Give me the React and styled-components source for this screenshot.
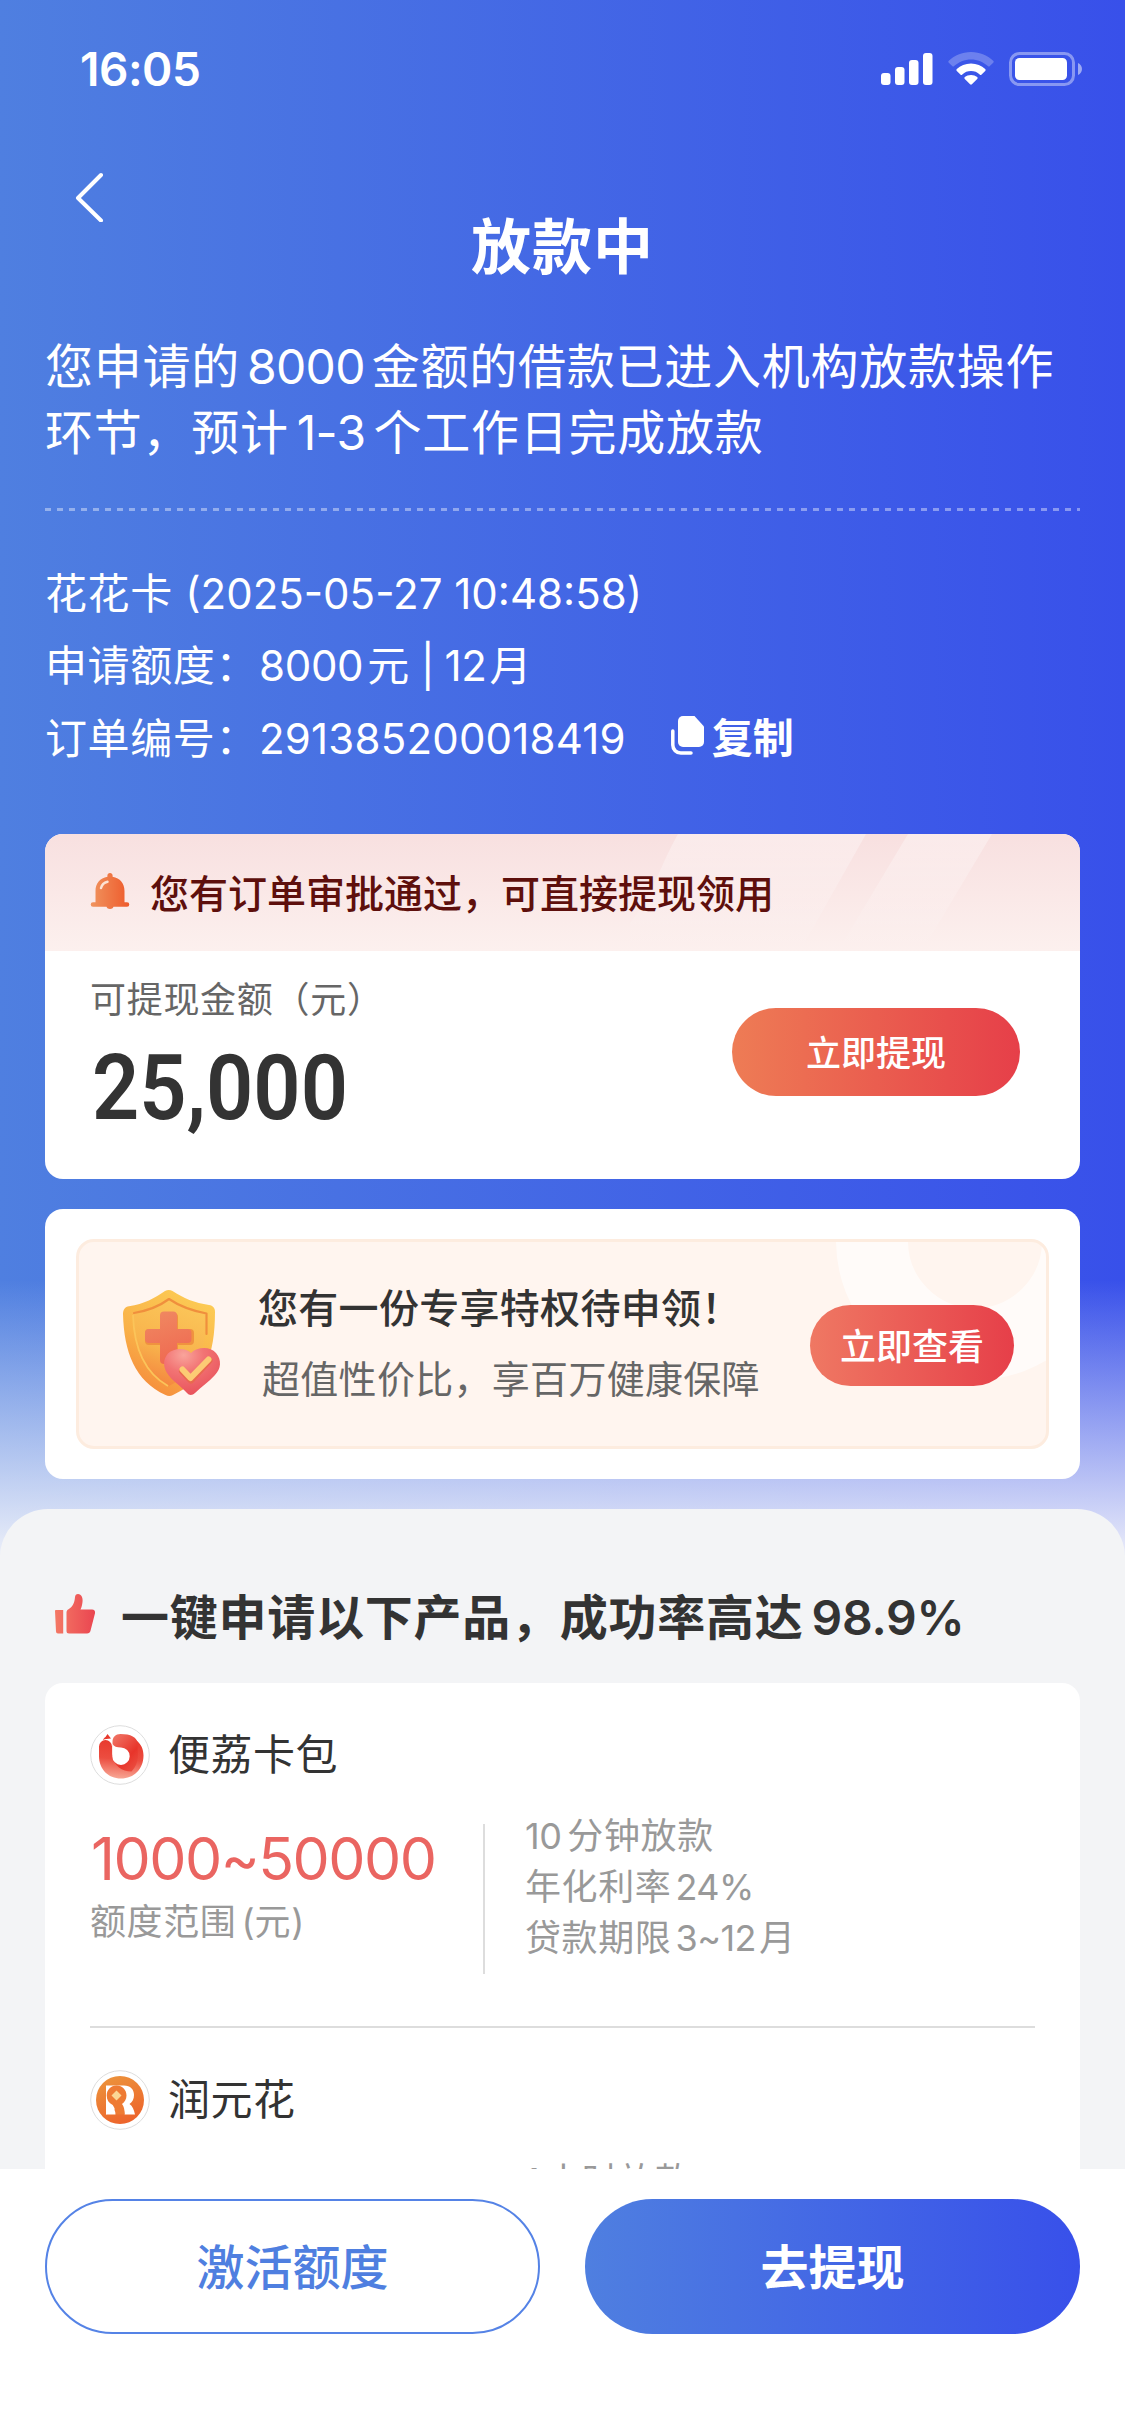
import React from 'react';
import styled, { createGlobalStyle } from 'styled-components';

const GlobalStyle = createGlobalStyle`
  * {
    box-sizing: border-box;
  }
  body {
    margin: 0;
    font-family: Inter, 'Noto Sans CJK SC', sans-serif;
    text-autospace: no-autospace;
    color: #333;
  }
  svg {
    display: block;
    flex: none;
  }
`;

const Page = styled.div`
  width: 1125px;
  height: 2436px;
  display: flex;
  flex-direction: column;
  overflow: hidden;
  background: linear-gradient(to bottom, rgba(243, 244, 250, 0) 1280px, #f3f4fa 1570px),
    linear-gradient(to right, #4f7fe0, #3850ea);
`;

const Content = styled.main`
  flex: 1;
  min-height: 0;
  overflow: hidden;
`;

const StatusBar = styled.div`
  height: 137px;
  padding: 0 42px 0 80px;
  display: flex;
  align-items: center;
  justify-content: space-between;
`;

const Time = styled.span`
  color: #fff;
  font-size: 46px;
  font-weight: 600;
  letter-spacing: -0.5px;
`;

const StatusIcons = styled.div`
  display: flex;
  align-items: center;
  gap: 15px;
`;

const NavBar = styled.div`
  height: 122px;
  padding: 35px 0 0 72px;
`;

const Title = styled.h1`
  margin: -47px 0 0;
  height: 70px;
  line-height: 70px;
  text-align: center;
  color: #fff;
  font-size: 60px;
  font-weight: 600;
  letter-spacing: 1px;
`;

const Intro = styled.p`
  margin: 52px 45px 0;
  padding-bottom: 42px;
  color: #fff;
  font-size: 48px;
  line-height: 66px;
  letter-spacing: 0.75px;
  white-space: nowrap;
`;

const Dashes = styled.div`
  height: 3px;
  margin: 0 45px;
  background: repeating-linear-gradient(
    to right,
    rgba(255, 255, 255, 0.4) 0 6px,
    transparent 6px 12px
  );
`;

const OrderInfo = styled.div`
  margin: 43px 45px 0;
  padding-bottom: 2px;
  color: #fff;
  font-size: 42px;
  letter-spacing: 0.6px;
`;

const InfoRow = styled.div`
  height: 72.5px;
  display: flex;
  align-items: center;
  white-space: pre;
`;

/* Latin digits get a little air next to Chinese characters */
const Num = styled.span`
  letter-spacing: ${(props) => props.$track || 0}px;
  margin-left: ${(props) => props.$left || 0}px;
  margin-right: ${(props) => props.$right || 0}px;
`;

const CopyButton = styled.button`
  display: flex;
  align-items: center;
  gap: 7px;
  margin-left: 45px;
  padding: 0;
  border: 0;
  background: none;
  color: #fff;
  font: 700 41px/60px 'Noto Sans CJK SC', sans-serif;
`;

const Card = styled.section`
  margin: ${(props) => props.$top}px 45px 0;
  border-radius: 18px;
  background: #fff;
  overflow: hidden;
`;

const Notice = styled.div`
  position: relative;
  height: 117px;
  padding: 0 0 2px 45px;
  display: flex;
  align-items: center;
  gap: 20px;
  background: linear-gradient(to bottom, #f8e0e0, #fcf0ee);
  color: #5e0f0c;
  font-size: 39px;
  font-weight: 500;
`;

const NoticeText = styled.span`
  position: relative;
`;

const Stripes = styled.svg`
  position: absolute;
  top: 0;
  right: 0;
`;

const Withdraw = styled.div`
  height: 228px;
  padding: 25px 60px 0 45px;
  display: flex;
  justify-content: space-between;
`;

const AmountLabel = styled.div`
  height: 48px;
  line-height: 48px;
  font-size: 36px;
  letter-spacing: 0.7px;
  color: #666;
`;

const Amount = styled.div`
  margin: 12px 0 0 2px;
  line-height: 106px;
  font-family: Roboto, sans-serif;
  font-size: 90px;
  font-weight: 600;
  transform: scaleX(0.92);
  transform-origin: left;
`;

const PillButton = styled.button`
  width: ${(props) => props.$width}px;
  height: ${(props) => props.$height}px;
  margin-top: ${(props) => props.$top}px;
  padding: 0 0 2px;
  flex: none;
  border: 0;
  border-radius: 50px;
  background: linear-gradient(to right, ${(props) => props.$from}, #e63f49);
  color: #fff;
  font: 500 ${(props) => props.$size}px 'Noto Sans CJK SC', sans-serif;
`;

const Privilege = styled.div`
  position: relative;
  margin: 30px 31px;
  height: 210px;
  padding: 0 32px 0 44px;
  display: flex;
  border: 3px solid #fdecdf;
  border-radius: 18px;
  background: #fff5ef;
  overflow: hidden;
`;

const Ring = styled.div`
  position: absolute;
  top: -140px;
  left: 757px;
  width: 278px;
  height: 278px;
  border: 72px solid rgba(255, 255, 255, 0.62);
  border-radius: 50%;
`;

const IconSlot = styled.div`
  padding-top: 46px;
`;

const PrivilegeText = styled.div`
  flex: 1;
  padding: 37px 0 0 35px;
  white-space: nowrap;
`;

const PrivilegeTitle = styled.div`
  line-height: 60px;
  font-size: 40px;
  font-weight: 500;
  letter-spacing: 0.3px;
`;

const PrivilegeSub = styled.div`
  margin: 10px 0 0 4px;
  line-height: 60px;
  font-size: 38px;
  letter-spacing: 0.3px;
  color: #666;
`;

const PrivilegeAction = styled.div`
  position: relative;
`;

const Sheet = styled.section`
  margin-top: 30px;
  padding-top: 69px;
  border-radius: 48px 48px 0 0;
  background: #f3f4f6;
`;

const SheetTitle = styled.h2`
  height: 72px;
  margin: 0 0 0 54px;
  display: flex;
  align-items: center;
  gap: 25px;
  font-size: 48px;
  font-weight: 600;
  letter-spacing: 0.75px;
  white-space: nowrap;
`;

const Product = styled.article`
  height: 345px;
  margin: 0 45px;
  padding-top: 42px;
  border-bottom: 2px solid #ddd;
`;

const ProductHead = styled.div`
  height: 60px;
  display: flex;
  align-items: center;
  gap: 18px;
  font-size: 42px;
  line-height: 60px;
  letter-spacing: 0.5px;
`;

const ProductBody = styled.div`
  margin-top: 27px;
  display: flex;
`;

const Range = styled.div`
  width: 393px;
  padding-top: 8px;
`;

const RangeValue = styled.div`
  padding-left: 1px;
  line-height: 77px;
  font-size: 59px;
  letter-spacing: -1.5px;
  color: #ea6561;
`;

const Muted = styled.div`
  line-height: 51px;
  font-size: 36px;
  letter-spacing: 0.6px;
  color: #999;
  white-space: nowrap;
`;

const Terms = styled.div`
  height: 150px;
  margin-top: 12px;
  padding-left: 40px;
  border-left: 2px solid #ddd;

  ${Muted}:first-child {
    margin-top: -12.5px;
  }
`;

const Footer = styled.footer`
  height: 267px;
  padding: 30px 45px 0;
  display: flex;
  gap: 45px;
  background: #fff;
`;

const FooterButton = styled.button`
  flex: none;
  width: 495px;
  height: 135px;
  padding: 0 0 5px;
  border: ${(props) => (props.$primary ? '0' : '2px solid #5583e6')};
  border-radius: 68px;
  background: ${(props) =>
    props.$primary ? 'linear-gradient(to right, #4f7fe0, #3850ea)' : '#fff'};
  color: ${(props) => (props.$primary ? '#fff' : '#4f7fe0')};
  font: ${(props) => (props.$primary ? 600 : 500)} 48px 'Noto Sans CJK SC', sans-serif;
`;

const SignalIcon = () => (
  <svg width="52" height="34" viewBox="0 0 52 34" fill="#fff">
    <rect x="0" y="21" width="9.500" height="12" rx="3" />
    <rect x="14" y="15" width="9.500" height="18" rx="3" />
    <rect x="28" y="8" width="9.500" height="25" rx="3" />
    <rect x="42" y="1" width="9.500" height="32" rx="3" />
  </svg>
);

const WifiIcon = () => (
  <svg width="46" height="34" viewBox="0 0 46 34" fill="#fff">
    <path d="M23 0C14 0 6 3.500 .8 8.800a1.300 1.300 0 0 0 0 1.900l3.400 3.400a1.300 1.300 0 0 0 1.900 0C10.500 10 16.500 7.400 23 7.400s12.500 2.600 16.900 6.700a1.300 1.300 0 0 0 1.900 0l3.400-3.400a1.300 1.300 0 0 0 0-1.900C40 3.500 32 0 23 0z" opacity="0.25" />
    <path d="M23 11.500c-5.600 0-10.600 2.100-14.200 5.600a1.300 1.300 0 0 0 0 1.900l3.600 3.500a1.300 1.300 0 0 0 1.900 0 12.600 12.600 0 0 1 17.400 0 1.300 1.300 0 0 0 1.900 0l3.600-3.500a1.300 1.300 0 0 0 0-1.900C33.600 13.600 28.600 11.500 23 11.500z" />
    <path d="M23 23c-2.500 0-4.600.8-6.200 2.100a1.200 1.200 0 0 0 0 1.800l5.300 5.400a1.300 1.300 0 0 0 1.800 0l5.300-5.400a1.200 1.200 0 0 0 0-1.800A9.600 9.600 0 0 0 23 23z" />
  </svg>
);

const BatteryIcon = () => (
  <svg width="74" height="36" viewBox="0 0 74 36" fill="none">
    <rect x="1.500" y="2.500" width="63" height="31" rx="9" stroke="#fff" strokeOpacity="0.4" strokeWidth="3" />
    <rect x="6" y="7" width="52" height="22" rx="4.500" fill="#fff" />
    <path d="M69 12c2.500 1 4 3.500 4 6s-1.500 5-4 6z" fill="#fff" fillOpacity="0.5" />
  </svg>
);

const BackIcon = () => (
  <svg width="36" height="50" viewBox="0 0 36 50" fill="none" stroke="#fff" strokeWidth="4" strokeLinecap="round" strokeLinejoin="round">
    <path d="M29 3 6 26l23 22.500" />
  </svg>
);

const CopyIcon = () => (
  <svg width="34" height="39" viewBox="0 0 34 39" fill="none">
    <path d="M12 0h11.500L33 10.500V26a5 5 0 0 1-5 5H12a5 5 0 0 1-5-5V5a5 5 0 0 1 5-5z" fill="#fff" />
    <path d="M1.800 15v14a8 8 0 0 0 8 8H20" stroke="#fff" strokeWidth="3.500" strokeLinecap="round" />
  </svg>
);

const BellIcon = () => (
  <svg width="40" height="36" viewBox="0 0 40 36">
    <defs>
      <linearGradient id="bell" x1="0" x2="1">
        <stop offset="0" stopColor="#f0945f" />
        <stop offset="1" stopColor="#ee5a2b" />
      </linearGradient>
    </defs>
    <path d="M20 0c1.500 0 2.600 1.200 2.600 2.600v1.200C30 5 34.500 10.500 34.500 18v11.200H37a2.300 2.300 0 0 1 0 4.600H23.500c-.5 1.400-1.800 2.200-3.500 2.200s-3-.8-3.500-2.200H3a2.300 2.300 0 0 1 0-4.600h2.500V18c0-7.500 4.500-13 11.900-14.200V2.600C17.400 1.200 18.500 0 20 0z" fill="url(#bell)" />
    <path d="M11 15c.8-3.300 3-5.500 6.500-6.300" fill="none" stroke="#fde3d3" strokeWidth="2.500" strokeLinecap="round" />
  </svg>
);

const ShieldIcon = () => (
  <svg width="100" height="112" viewBox="0 0 100 112">
    <defs>
      <linearGradient id="shieldEdge" x1="0.700" y1="0" x2="0.200" y2="1">
        <stop offset="0" stopColor="#fccb54" />
        <stop offset="0.550" stopColor="#f9b148" />
        <stop offset="1" stopColor="#f5873a" />
      </linearGradient>
      <linearGradient id="shieldFace" x1="0.700" y1="0" x2="0.400" y2="1">
        <stop offset="0" stopColor="#fbc75a" />
        <stop offset="0.600" stopColor="#f8b34c" />
        <stop offset="1" stopColor="#f4853f" />
      </linearGradient>
      <linearGradient id="cross" x1="0" y1="0" x2="0.300" y2="1">
        <stop offset="0" stopColor="#f08a62" />
        <stop offset="1" stopColor="#ef6b52" />
      </linearGradient>
      <radialGradient id="heart" cx="0.350" cy="0.150" r="0.900">
        <stop offset="0" stopColor="#f9a49b" />
        <stop offset="0.400" stopColor="#f27474" />
        <stop offset="1" stopColor="#e8505a" />
      </radialGradient>
    </defs>
    <path d="M42 3c2.500-1.500 5-1.500 7.500 0C60 10 72 15 86 17c4 .6 6 3 6 7-.2 44-10 68-42 83-2.500 1.200-5 1.200-7.500 0C12 93 1 64 0 26c0-4.500 2-7 6-7.700C21 16 32 10 42 3z" fill="url(#shieldEdge)" />
    <path d="M46 11C35 18.500 24 23 10 25c.5 36 11 60 36 73 26-13 38-34 38-73-15-2-27-6.500-38-14z" fill="url(#shieldFace)" />
    <path d="M11 25C26 22.500 36 18.500 46 11c11 7.500 22 11.500 37.500 14.500V46" fill="none" stroke="#f08f3d" strokeWidth="2.200" strokeLinecap="round" strokeLinejoin="round" />
    <path d="M10 27c1 33 12 58 35 71" fill="none" stroke="#fbc459" strokeWidth="1.800" />
    <path d="M41 25h10a4 4 0 0 1 4 4v12h12a4 4 0 0 1 4 4v8a4 4 0 0 1-4 4H55v14a4 4 0 0 1-4 4h-9a4 4 0 0 1-4-4V57H26a4 4 0 0 1-4-4v-8a4 4 0 0 1 4-4h12V29a4 4 0 0 1 3-4z" fill="#f0923f" />
    <path d="M41 23.500h9a4 4 0 0 1 4 4V41h10.500a4 4 0 0 1 4 4v6a4 4 0 0 1-4 4H54v17a4 4 0 0 1-4 4h-9a4 4 0 0 1-4-4V55H26a4 4 0 0 1-4-4v-6a4 4 0 0 1 4-4h11V27.500a4 4 0 0 1 4-4z" fill="url(#cross)" />
    <path d="M68 65c6-6 19-7 25 0 6 7 5 16-1 22-6 7-13 11-20 18-2.500 2.500-6 2.500-8 0-7-8-15-12-20-20-4-6.500-4-14 1-19.500 6-6 18-6 23-.5z" fill="url(#heart)" />
    <path d="m59.500 83 8.500 9 18-19.500" fill="none" stroke="#e9684f" strokeWidth="7" strokeLinecap="round" strokeLinejoin="round" />
    <path d="m59.500 81.500 8 8.500 18-18.500" fill="none" stroke="#fccb74" strokeWidth="6" strokeLinecap="round" strokeLinejoin="round" />
  </svg>
);

const ThumbIcon = () => (
  <svg width="42" height="40" viewBox="0 0 42 40">
    <defs>
      <linearGradient id="thumb" x1="0" x2="42" gradientUnits="userSpaceOnUse">
        <stop offset="0" stopColor="#f47a66" />
        <stop offset="1" stopColor="#ea4450" />
      </linearGradient>
    </defs>
    <path d="M1.800 16h7.400v23.500H4a2 2 0 0 1-2-2L1 17a1 1 0 0 1 .8-1z" fill="url(#thumb)" />
    <path d="M12.500 18.500c0-1.500.8-2.500 2-3.200C18.500 13 20.500 9 21 3c.2-1.800 1.300-3 3-3 3.500 0 5 4 4.500 8-.4 3-1 5.500-2 7.500H38c2.200 0 3.500 1.700 3 3.800l-4.500 17.500c-.5 1.800-1.600 2.700-3.500 2.700H15a2.500 2.500 0 0 1-2.500-2.500z" fill="url(#thumb)" />
  </svg>
);

const LycheeLogo = () => (
  <svg width="60" height="60" viewBox="0 0 60 60">
    <defs>
      <linearGradient id="lycheeBody" x1="0.500" y1="0" x2="0.400" y2="1">
        <stop offset="0" stopColor="#e8392d" />
        <stop offset="0.500" stopColor="#ec4d40" />
        <stop offset="1" stopColor="#f8a795" />
      </linearGradient>
      <linearGradient id="lycheeTop" x1="0" y1="0" x2="0.700" y2="1">
        <stop offset="0" stopColor="#f0796a" />
        <stop offset="0.700" stopColor="#e8342a" />
        <stop offset="1" stopColor="#ea4a3d" />
      </linearGradient>
    </defs>
    <circle cx="30" cy="30" r="29.300" fill="#fff" stroke="#ddd" />
    {/* round fruit with a leaning leaf over it */}
    <path d="M9 21.500a6.500 6.500 0 0 1 13 0V30l24-15c5 4 7.500 9 7.500 15.500C53.500 44 44 53.500 31 53.500S9 44 9 31z" fill="url(#lycheeBody)" />
    <path d="M22.500 17c0-5 3-8 8-8 10 0 17 3 17 10 0 9 3 18-6 27.500C32 46.500 24 41 22.500 31z" fill="url(#lycheeTop)" />
    <path d="M22.300 18.500c1.500 3 4.500 4 8.700 4a8.700 8.700 0 1 1-8.700 8.700z" fill="#fff" />
    <path d="m17.500 9 3.500 4.500c-4 .2-5.500.5-8 1.500.5-1.500 1.500-2.500 2.500-3z" fill="#e8392d" />
  </svg>
);

const RunyuanLogo = () => (
  <svg width="60" height="60" viewBox="0 0 60 60">
    <defs>
      <linearGradient id="runyuan" x1="0.300" y1="0" x2="0.700" y2="1">
        <stop offset="0" stopColor="#ec923b" />
        <stop offset="1" stopColor="#ed622b" />
      </linearGradient>
    </defs>
    <circle cx="30" cy="30" r="29.300" fill="#fff" stroke="#ddd" />
    <circle cx="30" cy="30" r="24" fill="url(#runyuan)" />
    <path d="M16 15.500h18c6.500 0 10 4 10 9.500 0 4-1.500 7-4.500 9 3 2 4.500 6 5.500 10.500H34.500c-.3-4-1-7-2.500-9.500L16 44.500z" fill="#fff" />
    <path d="M26.500 15.500c6 0 10 4.500 10 10 0 4-2 6.500-4.500 8.500 2 2.500 2.700 6 2.700 10.500h-9c0-4-1-6.500-3-9.500-4-2-6-5-6-9.500 0-5.500 4-10 9.800-10z" fill="#ee7b34" />
    <path d="M16 33c2 2.500 4 3.500 6.500 4 2 2 3 4.500 3 7.500H16z" fill="#fff" />
    <path d="m26.500 20.500 5 5-5 5-5-5z" fill="#fbd795" />
  </svg>
);

const products = [
  {
    name: '便荔卡包',
    Logo: LycheeLogo,
    range: '1000~50000',
    time: ['10', '分钟放款'],
    rate: '24%',
    term: '3~12',
  },
  { name: '润元花', Logo: RunyuanLogo, time: ['1', '小时放款'] },
];

export default function App() {
  return (
    <Page>
      <GlobalStyle />
      <Content>
        <StatusBar>
          <Time>16:05</Time>
          <StatusIcons>
            <SignalIcon />
            <WifiIcon />
            <BatteryIcon />
          </StatusIcons>
        </StatusBar>
        <NavBar>
          <BackIcon />
        </NavBar>
        <Title>放款中</Title>
        <Intro>
          您申请的<Num $left={7} $right={7} $track={-0.7}>8000</Num>金额的借款已进入机构放款操作
          <br />
          环节，预计<Num $left={8} $right={8} $track={-0.7}>1-3</Num>个工作日完成放款
        </Intro>
        <Dashes />
        <OrderInfo>
          <InfoRow>
            <span>
              花花卡 <Num>(2025-05-27 10:48:58)</Num>
            </span>
          </InfoRow>
          <InfoRow>
            <span>
              申请额度：<Num $left={1} $right={4} $track={-0.3}>8000</Num>元
              <Num $track={-1}> | </Num>
              <Num $right={3} $track={-0.3}>12</Num>月
            </span>
          </InfoRow>
          <InfoRow>
            <span>
              订单编号：<Num $left={1} $track={0.2}>291385200018419</Num>
            </span>
            <CopyButton>
              <CopyIcon />
              复制
            </CopyButton>
          </InfoRow>
        </OrderInfo>
        <Card $top={60}>
          <Notice>
            <Stripes width="450" height="117" viewBox="0 0 450 117">
              <defs>
                <linearGradient id="stripe" x1="0" y1="0" x2="0" y2="1">
                  <stop offset="0" stopColor="#fff" stopOpacity="0.350" />
                  <stop offset="1" stopColor="#fff" stopOpacity="0" />
                </linearGradient>
              </defs>
              <path d="M48 0h188l-66 117H-30C20 80 25 40 48 0z" fill="url(#stripe)" />
              <path d="M278 0h84l-70 117H208z" fill="url(#stripe)" />
            </Stripes>
            <BellIcon />
            <NoticeText>您有订单审批通过，可直接提现领用</NoticeText>
          </Notice>
          <Withdraw>
            <div>
              <AmountLabel>可提现金额（元）</AmountLabel>
              <Amount>25,000</Amount>
            </div>
            <PillButton $width={288} $height={88} $top={32} $size={35} $from="#ee7c55">
              立即提现
            </PillButton>
          </Withdraw>
        </Card>
        <Card $top={30}>
          <Privilege>
            <Ring />
            <IconSlot>
              <ShieldIcon />
            </IconSlot>
            <PrivilegeText>
              <PrivilegeTitle>您有一份专享特权待申领！</PrivilegeTitle>
              <PrivilegeSub>超值性价比，享百万健康保障</PrivilegeSub>
            </PrivilegeText>
            <PrivilegeAction>
              <PillButton $width={204} $height={81} $top={63} $size={36} $from="#ef7863">
                立即查看
              </PillButton>
            </PrivilegeAction>
          </Privilege>
        </Card>
        <Sheet>
          <SheetTitle>
            <ThumbIcon />
            <span>
              一键申请以下产品，成功率高达<Num $left={8} $track={-0.2}>98.9%</Num>
            </span>
          </SheetTitle>
          <Card $top={33}>
            {products.map(({ name, Logo, range, time, rate, term }) => (
              <Product key={name}>
                <ProductHead>
                  <Logo />
                  <span>{name}</span>
                </ProductHead>
                <ProductBody>
                  <Range>
                    {range && (
                      <>
                        <RangeValue>{range}</RangeValue>
                        <Muted>
                          额度范围<Num $left={5}>(</Num>元<Num>)</Num>
                        </Muted>
                      </>
                    )}
                  </Range>
                  <Terms>
                    <Muted>
                      <Num $right={6} $track={-0.5}>{time[0]}</Num>
                      {time[1]}
                    </Muted>
                    {rate && (
                      <Muted>
                        年化利率<Num $left={4} $track={-0.5}>{rate}</Num>
                      </Muted>
                    )}
                    {term && (
                      <Muted>
                        贷款期限<Num $left={4} $right={3} $track={-0.5}>{term}</Num>月
                      </Muted>
                    )}
                  </Terms>
                </ProductBody>
              </Product>
            ))}
          </Card>
        </Sheet>
      </Content>
      <Footer>
        <FooterButton>激活额度</FooterButton>
        <FooterButton $primary>去提现</FooterButton>
      </Footer>
    </Page>
  );
}
